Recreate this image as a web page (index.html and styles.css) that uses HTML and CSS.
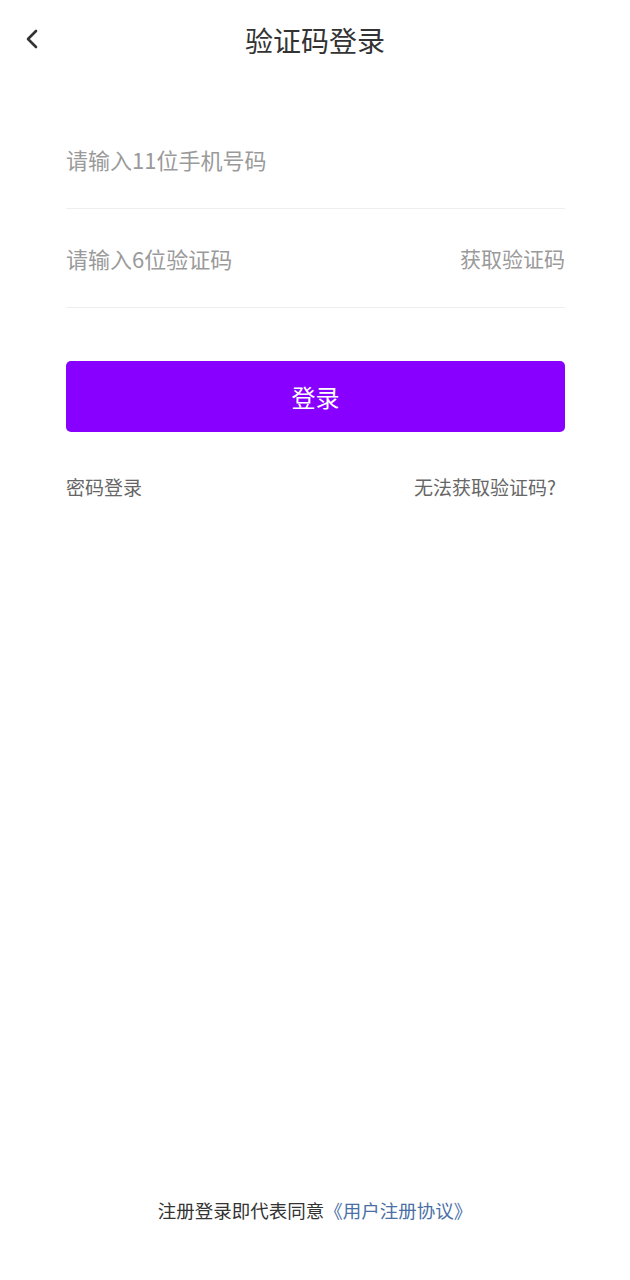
FILE: index.html
```html
<!DOCTYPE html>
<html lang="zh-CN">

<head>
  <meta charset="UTF-8" />
  <meta name="viewport" content="width=device-width, initial-scale=1.0">
  <title>验证码登录</title>
  <link rel="stylesheet" href="styles.css">
</head>

<body>
  <header class="nav-bar">
    <a href="#" class="back-button" aria-label="返回">
      <svg width="14" height="20" viewBox="0 0 14 20">
        <path d="M11 2 L3 10 L11 18" fill="none" stroke="#333" stroke-width="2.6" stroke-linecap="round" stroke-linejoin="round" />
      </svg>
    </a>
    <h1 class="nav-title">验证码登录</h1>
  </header>

  <main class="login-form">
    <div class="field">
      <input type="tel" class="field-input" placeholder="请输入11位手机号码">
    </div>
    <div class="field">
      <input type="text" class="field-input" placeholder="请输入6位验证码">
      <a href="#" class="code-button">获取验证码</a>
    </div>

    <button class="submit-button">登录</button>

    <div class="form-links">
      <a href="#">密码登录</a>
      <a href="#">无法获取验证码?</a>
    </div>
  </main>

  <footer class="agreement">
    注册登录即代表同意<a href="#">《用户注册协议》</a>
  </footer>
</body>

</html>
```

FILE: styles.css
```css
:root {
  --text-dark: #333333;
  --text-muted: #666666;
  --placeholder: #9a9a9a;
  --line: #eeeeee;
  --accent: #8800ff;
  --link: #4a6fa5;
}

* {
  margin: 0;
  padding: 0;
  box-sizing: border-box;
}

body {
  min-height: 100vh;
  background: #fff;
  font-family: "Noto Sans CJK SC", "Noto Sans", sans-serif;
  color: var(--text-dark);
  display: flex;
  flex-direction: column;
}

a {
  text-decoration: none;
}

.nav-bar {
  position: relative;
  height: 80px;
  display: flex;
  align-items: center;
  justify-content: center;
}

.back-button {
  position: absolute;
  left: 25px;
  top: 29px;
  display: flex;
}

.nav-title {
  font-size: 28px;
  font-weight: 400;
  color: var(--text-dark);
  line-height: 1;
}

.login-form {
  padding: 30px 65px 0 66px;
  display: flex;
  flex-direction: column;
}

.field {
  height: 99px;
  display: flex;
  align-items: center;
  border-bottom: 1px solid var(--line);
}

.field-input {
  flex: 1;
  min-width: 0;
  border: none;
  outline: none;
  background: none;
  font-family: inherit;
  font-size: 22px;
  color: var(--text-dark);
}

.field-input::placeholder {
  color: var(--placeholder);
}

.code-button {
  font-size: 21px;
  color: var(--placeholder);
}

.submit-button {
  margin-top: 53px;
  height: 71px;
  border: none;
  border-radius: 5px;
  background: var(--accent);
  color: #fff;
  font-family: inherit;
  font-size: 24px;
  cursor: pointer;
}

.form-links {
  margin-top: 40px;
  display: flex;
  justify-content: space-between;
  padding-right: 9px;
  line-height: 30px;
}

.form-links a {
  font-size: 19px;
  color: var(--text-muted);
}

.agreement {
  margin-top: auto;
  padding-bottom: 55px;
  text-align: center;
  font-size: 18.5px;
  line-height: 30px;
  color: var(--text-dark);
}

.agreement a {
  color: var(--link);
}
```
